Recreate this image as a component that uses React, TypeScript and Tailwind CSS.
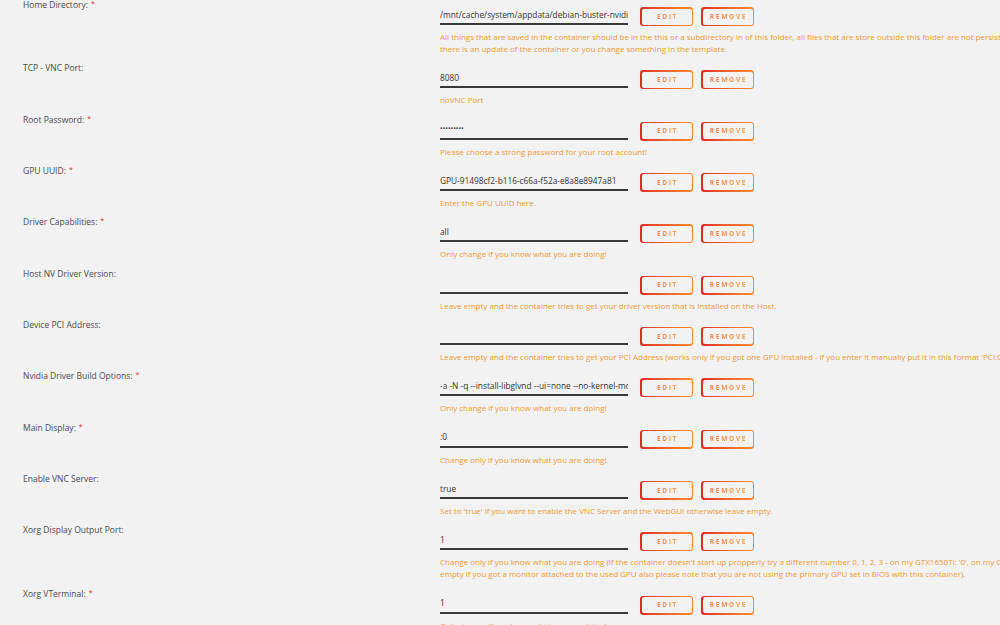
import React from "react";

type Field = {
  label: string;
  required?: boolean;
  value: string;
  lines: string[];
  secret?: boolean;
};

const fields: Field[] = [
  {
    label: "Home Directory:",
    required: true,
    value: "/mnt/cache/system/appdata/debian-buster-nvidia",
    lines: [
      "All things that are saved in the container should be in the this or a subdirectory in of this folder, all files that are store outside this folder are not persistant and will be wiped if",
      "there is an update of the container or you change something in the template.",
    ],
  },
  { label: "TCP - VNC Port:", value: "8080", lines: ["noVNC Port"] },
  {
    label: "Root Password:",
    required: true,
    value: "•••••••••",
    secret: true,
    lines: ["Please choose a strong password for your root account!"],
  },
  {
    label: "GPU UUID:",
    required: true,
    value: "GPU-91498cf2-b116-c66a-f52a-e8a8e8947a81",
    lines: ["Enter the GPU UUID here."],
  },
  {
    label: "Driver Capabilities:",
    required: true,
    value: "all",
    lines: ["Only change if you know what you are doing!"],
  },
  {
    label: "Host NV Driver Version:",
    value: "",
    lines: ["Leave empty and the container tries to get your driver version that is installed on the Host."],
  },
  {
    label: "Device PCI Address:",
    value: "",
    lines: [
      "Leave empty and the container tries to get your PCI Address (works only if you got one GPU installed - if you enter it manually put it in this format 'PCI:01:00:0').",
    ],
  },
  {
    label: "Nvidia Driver Build Options:",
    required: true,
    value: "-a -N -q --install-libglvnd --ui=none --no-kernel-module",
    lines: ["Only change if you know what you are doing!"],
  },
  {
    label: "Main Display:",
    required: true,
    value: ":0",
    lines: ["Change only if you know what you are doing!"],
  },
  {
    label: "Enable VNC Server:",
    value: "true",
    lines: ["Set to 'true' if you want to enable the VNC Server and the WebGUI otherwise leave empty."],
  },
  {
    label: "Xorg Display Output Port:",
    value: "1",
    lines: [
      "Change only if you know what you are doing (If the container doesn't start up propperly try a different number 0, 1, 2, 3 - on my GTX1650Ti: '0', on my GTX1060: '1' and leave this",
      "empty if you got a monitor attached to the used GPU also please note that you are not using the primary GPU set in BIOS with this container).",
    ],
  },
  {
    label: "Xorg VTerminal:",
    required: true,
    value: "1",
    lines: ["Only change if you know what you are doing!"],
  },
];

function GradientButton({ children }: { children: React.ReactNode }) {
  return (
    <div className="rounded-[3px] bg-gradient-to-r from-[#e22828] to-[#ff8c2f] p-[1.5px]">
      <div className="flex h-[16px] w-[50px] items-center justify-center rounded-[2px] bg-[#f2f2f2]">
        <span className="bg-gradient-to-r from-[#f27a4c] to-[#ffa040] bg-clip-text pl-[2px] text-[6.5px] font-bold tracking-[1.7px] text-transparent">
          {children}
        </span>
      </div>
    </div>
  );
}

function Row({ field }: { field: Field }) {
  return (
    <div className="grid grid-cols-[417px_1fr] pb-[8.33px]">
      <div className="text-[8.5px] leading-[10px] text-[#4b4b4b]">
        {field.label}
        {field.required && (
          <span className="relative -top-[2px] ml-[3px] text-[7px] text-[#e22828]">*</span>
        )}
      </div>
      <div className="pt-[7px]">
        <div className="flex h-[19px] items-start gap-[12px]">
          <div
            className={`flex h-[18px] w-[188px] items-center overflow-hidden whitespace-nowrap border-b-2 border-[#383838] ${
              field.secret ? "text-[7px]" : "text-[8.3px]"
            } text-[#333333]`}
          >
            {field.value}
          </div>
          <div className="flex gap-[8px]">
            <GradientButton>EDIT</GradientButton>
            <GradientButton>REMOVE</GradientButton>
          </div>
        </div>
        <div className="mt-[5px] text-[8px] leading-[12px] text-[#f09a34]">
          {field.lines.map((line, i) => (
            <div key={i} className="whitespace-nowrap">
              {line}
            </div>
          ))}
        </div>
      </div>
    </div>
  );
}

export default function App() {
  return (
    <div
      className="h-[625px] w-[1000px] overflow-hidden bg-[#f2f2f2] pl-[23px]"
      style={{ fontFamily: '"Open Sans", "Noto Sans", sans-serif' }}
    >
      {fields.map((f) => (
        <Row key={f.label} field={f} />
      ))}
    </div>
  );
}
